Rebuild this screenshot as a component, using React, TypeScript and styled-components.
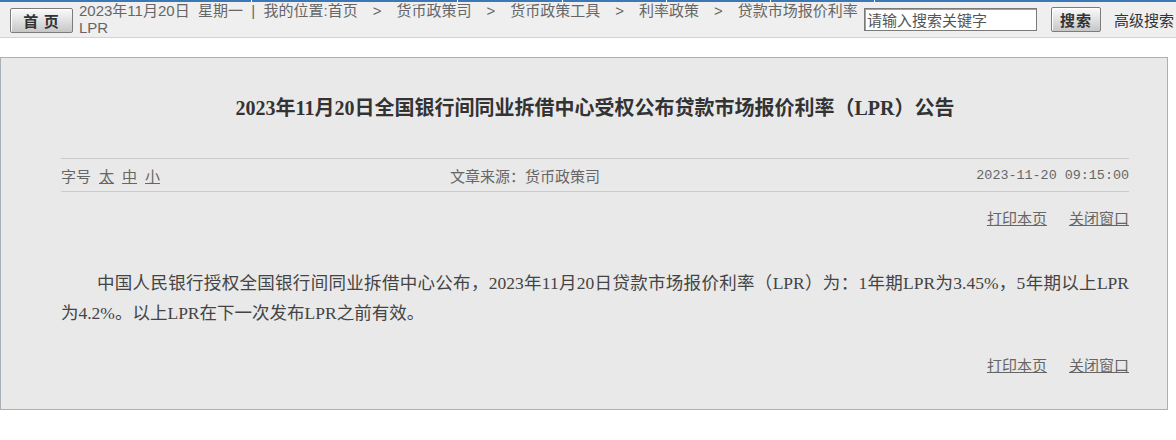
import React from 'react';
import styled, { createGlobalStyle } from 'styled-components';

const GlobalStyle = createGlobalStyle`
  body {
    margin: 0;
    background: #fff;
    font-family: 'Liberation Sans', 'Noto Sans CJK SC', sans-serif;
  }
`;

const NavStrip = styled.div`
  display: flex;
  gap: 1px;
  height: 2px;
`;

const NavSegment = styled.div<{ w?: number }>`
  background-color: #3c78b6;
  flex: ${({ w }) => (w ? `0 0 ${w}px` : '1')};
`;

const TopBar = styled.div`
  height: 35px;
  background-color: #efefef;
  border-bottom: 1px solid #d3d3d3;
  display: flex;
  align-items: flex-start;
  padding-left: 10px;
`;

const GrayButton = styled.button<{ width: number }>`
  width: ${({ width }) => width}px;
  height: 25px;
  padding: 0;
  margin-top: 6px;
  background: linear-gradient(#fafafa, #e4e4e4 45%, #c6c6c6);
  border: 1px solid #7c7c7c;
  border-radius: 2px;
  box-shadow: inset 1px 1px 0 #fff;
  color: #333;
  font-family: 'Noto Sans CJK SC', sans-serif;
  font-size: 15px;
  font-weight: bold;
  letter-spacing: 1px;
  cursor: pointer;
`;

const Breadcrumb = styled.div`
  flex: 0 0 785px;
  margin-left: 6px;
  color: #666;
  font-size: 15px;
  line-height: 17px;
  overflow: hidden;
`;

const CrumbLine = styled.div`
  white-space: nowrap;
`;

const Sep = styled.span`
  padding: 0 15px;
`;

const SearchInput = styled.input`
  box-sizing: border-box;
  width: 173px;
  height: 23px;
  margin-top: 6px;
  padding: 0 2px;
  border: 1px solid #7a7a7a;
  box-shadow: inset 1px 1px 0 #a0a0a0;
  background: #fff;
  font-family: 'Noto Sans CJK SC', sans-serif;
  font-size: 15px;
  color: #333;
  outline: none;

  &::placeholder {
    color: #555;
  }
`;

const SearchButton = styled(GrayButton)`
  margin-left: 14px;
  margin-top: 5px;
`;

const AdvancedLink = styled.span`
  margin-left: 13px;
  margin-top: 9px;
  font-family: 'Noto Sans CJK SC', sans-serif;
  font-size: 15px;
  line-height: 17px;
  color: #333;
  white-space: nowrap;
`;

const Panel = styled.div`
  margin: 19px 8px 0 0;
  border: 1px solid #a9b0b7;
  background-color: #e9e9e9;
  padding: 35px 38px 34px 60px;
`;

const Title = styled.h1`
  margin: 0;
  text-align: center;
  font-family: 'Liberation Serif', 'Noto Sans CJK SC', serif;
  font-size: 20px;
  line-height: 30px;
  font-weight: bold;
  color: #333;
`;

const MetaRow = styled.div`
  margin-top: 35px;
  height: 32px;
  border-top: 1px solid #cbcbcb;
  border-bottom: 1px solid #cbcbcb;
  display: grid;
  grid-template-columns: 389px 1fr auto;
  align-items: center;
  color: #666;
  font-family: 'Noto Sans CJK SC', sans-serif;
  font-size: 15px;
`;

const SizeLink = styled.a`
  margin-left: 8px;
  color: #666;
  text-decoration: underline;
  cursor: pointer;
`;

const DateText = styled.span`
  font-family: 'Liberation Mono', monospace;
  font-size: 13.4px;
`;

const LinkRow = styled.div<{ top: number }>`
  margin-top: ${({ top }) => top}px;
  display: flex;
  justify-content: flex-end;
  gap: 22px;
  line-height: 20px;
  font-family: 'Noto Sans CJK SC', sans-serif;
  font-size: 15px;
`;

const ActionLink = styled.a`
  color: #666;
  text-decoration: underline;
  cursor: pointer;
`;

const Body = styled.p`
  margin: 40px 0 0;
  text-indent: 36px;
  text-align: justify;
  font-family: 'Liberation Serif', 'Noto Sans CJK SC', serif;
  font-size: 17.5px;
  line-height: 30px;
  color: #444;
`;

const crumbs = ['货币政策司', '货币政策工具', '利率政策'];

const App: React.FC = () => {
  return (
    <>
      <GlobalStyle />
      <NavStrip>
        {[251, 205, 104, 103, 103, 103].map((w, i) => (
          <NavSegment key={i} w={w} />
        ))}
        <NavSegment />
      </NavStrip>
      <TopBar>
        <GrayButton width={63}>首 页</GrayButton>
        <Breadcrumb>
          <CrumbLine>
            2023年11月20日&nbsp;&nbsp;星期一&nbsp;&nbsp;|&nbsp;&nbsp;我的位置:首页
            {crumbs.map(c => (
              <React.Fragment key={c}>
                <Sep>&gt;</Sep>
                {c}
              </React.Fragment>
            ))}
            <Sep>&gt;</Sep>
            贷款市场报价利率
          </CrumbLine>
          <CrumbLine>LPR</CrumbLine>
        </Breadcrumb>
        <SearchInput placeholder="请输入搜索关键字" />
        <SearchButton width={50}>搜索</SearchButton>
        <AdvancedLink>高级搜索</AdvancedLink>
      </TopBar>

      <Panel>
        <Title>2023年11月20日全国银行间同业拆借中心受权公布贷款市场报价利率（LPR）公告</Title>
        <MetaRow>
          <span>
            字号
            <SizeLink>太</SizeLink>
            <SizeLink>中</SizeLink>
            <SizeLink>小</SizeLink>
          </span>
          <span>文章来源：货币政策司</span>
          <DateText>2023-11-20 09:15:00</DateText>
        </MetaRow>
        <LinkRow top={16}>
          <ActionLink>打印本页</ActionLink>
          <ActionLink>关闭窗口</ActionLink>
        </LinkRow>
        <Body>
          中国人民银行授权全国银行间同业拆借中心公布，2023年11月20日贷款市场报价利率（LPR）为：1年期LPR为3.45%，5年期以上LPR为4.2%。以上LPR在下一次发布LPR之前有效。
        </Body>
        <LinkRow top={27}>
          <ActionLink>打印本页</ActionLink>
          <ActionLink>关闭窗口</ActionLink>
        </LinkRow>
      </Panel>
    </>
  );
};

export default App;
